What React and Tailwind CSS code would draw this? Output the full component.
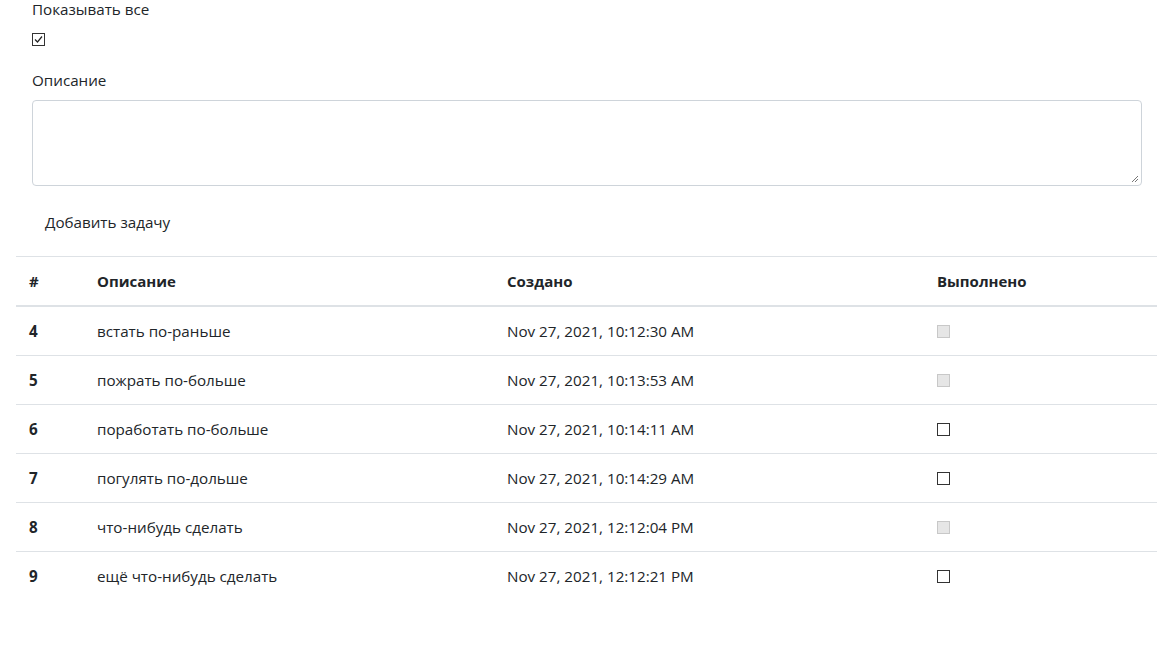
import React from "react";

const rows = [
  { id: 4, text: "встать по-раньше", date: "Nov 27, 2021, 10:12:30 AM", disabled: true },
  { id: 5, text: "пожрать по-больше", date: "Nov 27, 2021, 10:13:53 AM", disabled: true },
  { id: 6, text: "поработать по-больше", date: "Nov 27, 2021, 10:14:11 AM", disabled: false },
  { id: 7, text: "погулять по-дольше", date: "Nov 27, 2021, 10:14:29 AM", disabled: false },
  { id: 8, text: "что-нибудь сделать", date: "Nov 27, 2021, 12:12:04 PM", disabled: true },
  { id: 9, text: "ещё что-нибудь сделать", date: "Nov 27, 2021, 12:12:21 PM", disabled: false },
];

function Box({ disabled }) {
  return disabled ? (
    <span className="block w-[13px] h-[13px] border border-[#c8c8c8] bg-[#e6e6e6]" />
  ) : (
    <span className="block w-[13px] h-[13px] border border-[#333] bg-white" />
  );
}

export default function App() {
  return (
    <div
      className="w-[1160px] h-[672px] bg-white text-[#212529] text-[15.2px]"
      style={{ fontFamily: '"Open Sans", "Noto Sans", Arial, sans-serif' }}
    >
      <div className="pl-[32px] pr-[18px]">
        <div className="leading-[18px]">Показывать все</div>
        <div className="mt-[15px] w-[13px] h-[13px] border border-[#333] flex items-center justify-center">
          <svg width="11" height="11" viewBox="0 0 11 11">
            <path d="M2 5.5 L4.5 8 L9 2.5" fill="none" stroke="#222" strokeWidth="1.2" />
          </svg>
        </div>
        <div className="mt-[25px] leading-[18px]">Описание</div>
        <div className="mt-[11px] relative h-[86px] border border-[#ced4da] rounded-[4px] bg-white">
          <svg className="absolute right-[2px] bottom-[2px]" width="8" height="8" viewBox="0 0 8 8">
            <path d="M7 1 L1 7 M7 4 L4 7" stroke="#777" strokeWidth="1" />
          </svg>
        </div>
        <div className="mt-[20px] h-[32px] flex items-center pl-[13px]">Добавить задачу</div>
      </div>
      <div className="mt-[18px] mx-[16px] w-[1141px] border-t border-[#dee2e6]">
        <div className="grid grid-cols-[73px_410px_430px_1fr] h-[50px] items-center font-bold border-b-2 border-[#dee2e6] text-[15px]">
          <div className="pl-[13px]">#</div>
          <div className="pl-[8px]">Описание</div>
          <div className="pl-[8px]">Создано</div>
          <div className="pl-[8px]">Выполнено</div>
        </div>
        {rows.map((r, i) => (
          <div
            key={r.id}
            className={
              "grid grid-cols-[73px_410px_430px_1fr] h-[49px] items-center " +
              (i < rows.length - 1 ? "border-b border-[#dee2e6]" : "")
            }
          >
            <div className="pl-[13px] font-bold">{r.id}</div>
            <div className="pl-[8px]">{r.text}</div>
            <div className="pl-[8px]">{r.date}</div>
            <div className="pl-[8px]">
              <Box disabled={r.disabled} />
            </div>
          </div>
        ))}
      </div>
    </div>
  );
}
